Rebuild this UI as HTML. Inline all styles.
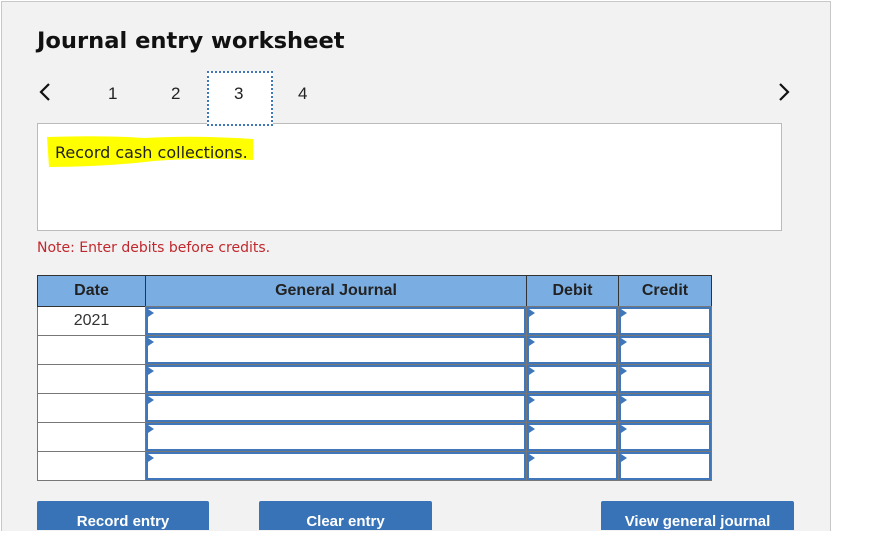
<!DOCTYPE html>
<html><head><style>
body{margin:0;width:876px;height:539px;background:#fff;position:relative;overflow:hidden;font-family:"Liberation Sans",Arial,sans-serif}
div{position:absolute;box-sizing:border-box}
.panel{left:1px;top:1px;width:830px;height:530px;background:#f2f2f2;border:1px solid #c8c8c8;border-bottom:none}
.t{font-size:17px;color:#222}
.h{background:#7aaee3;border:1px solid #333;font-weight:bold;font-size:16px;color:#222;text-align:center;line-height:29px}
.d{background:#fff;border:1px solid #777;border-top:none;font-size:16px;color:#333;text-align:center;line-height:27px}
.in{background:#fff;border:2px solid #3f77ba;outline:1px solid #777}
.in::before{content:"";position:absolute;left:0;top:0;border-left:6px solid #3f77ba;border-top:4px solid transparent;border-bottom:4px solid transparent}
.btn{background:#3873b8;color:#fff;font-weight:bold;font-size:15px;text-align:center;padding-top:12px;height:29px;top:501px;border-radius:2px 2px 0 0}
</style></head><body>
<div class="panel"></div>
<div style="left:37px;top:28px;font-family:'DejaVu Sans',sans-serif;font-weight:bold;font-size:22.6px;color:#111">Journal entry worksheet</div>
<svg style="position:absolute;left:38px;top:82px" width="14" height="20"><path d="M11 2 L3 10 L11 18" stroke="#111" stroke-width="2.2" fill="none"/></svg>
<svg style="position:absolute;left:777px;top:82px" width="14" height="20"><path d="M3 2 L11 10 L3 18" stroke="#111" stroke-width="2.2" fill="none"/></svg>
<div class="t" style="left:108px;top:84px">1</div>
<div class="t" style="left:171px;top:84px">2</div>
<div style="left:37px;top:123px;width:745px;height:108px;background:#fff;border:1px solid #bbb"></div>
<div style="left:207px;top:71px;width:66px;height:55px;background:#fff;border:2px dotted #3f77ba"></div>
<div class="t" style="left:234px;top:84px">3</div>
<div class="t" style="left:298px;top:84px">4</div>
<svg style="position:absolute;left:44px;top:134px" width="212" height="36"><path d="M3 3 Q60 1 100 4 Q150 1 209 5 L209 26 Q160 23 110 27 Q60 33 5 33 Z" fill="#ffff00"/></svg>
<div style="left:55px;top:143px;font-family:'DejaVu Sans',sans-serif;font-size:16px;color:#222">Record cash collections.</div>
<div style="left:37px;top:240px;font-family:'DejaVu Sans',sans-serif;font-size:14px;color:#c0282d">Note: Enter debits before credits.</div>
<div class="h" style="left:37px;top:275px;width:109px;height:32px">Date</div>
<div class="h" style="left:145px;top:275px;width:382px;height:32px">General Journal</div>
<div class="h" style="left:526px;top:275px;width:93px;height:32px">Debit</div>
<div class="h" style="left:618px;top:275px;width:94px;height:32px">Credit</div>
<div id="rows"></div>
<script>
var s='';for(var i=0;i<6;i++){var y=307+i*29;
s+='<div class="d" style="left:37px;top:'+y+'px;width:109px;height:29px">'+(i==0?'2021':'')+'</div>';
s+='<div class="in" style="left:146px;top:'+y+'px;width:380px;height:28px"></div>';
s+='<div class="in" style="left:527px;top:'+y+'px;width:91px;height:28px"></div>';
s+='<div class="in" style="left:619px;top:'+y+'px;width:92px;height:28px"></div>';}
document.getElementById('rows').outerHTML=s;
</script>
<div class="btn" style="left:37px;width:172px">Record entry</div>
<div class="btn" style="left:259px;width:173px">Clear entry</div>
<div class="btn" style="left:601px;width:193px">View general journal</div>
</body></html>
